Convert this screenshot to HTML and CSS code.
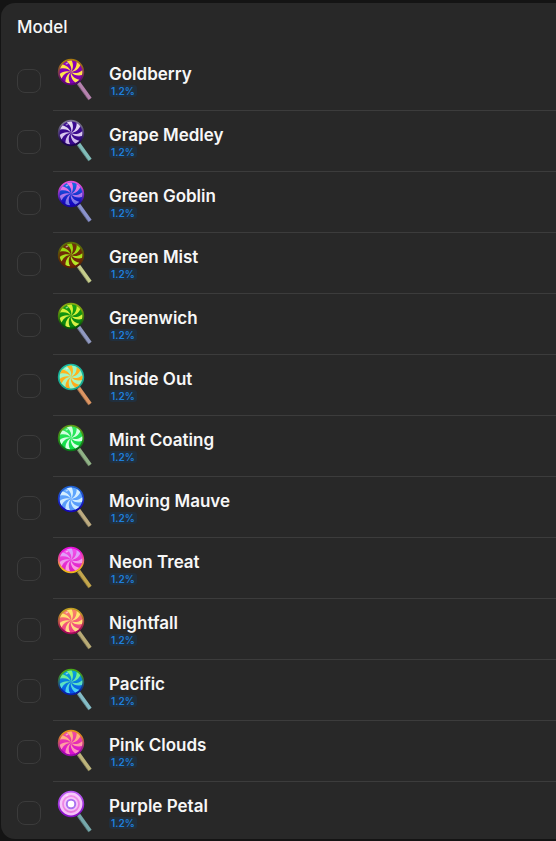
FILE: index.html
```
<!DOCTYPE html>
<html lang="en">
<head>
  <meta charset="utf-8">
  <title>Model</title>
  <link rel="stylesheet" href="styles.css">
</head>
<body>
  <main class="model-card">
    <h1 class="card-title">Model</h1>
    <ul id="model-list" class="model-list"></ul>
  </main>

  <script src="script.js"></script>
</body>
</html>
```

FILE: styles.css
```
* {
  box-sizing: border-box;
}

body {
  margin: 0;
  padding: 3px 0 2px 1px;
  background-color: #141414;
  color: #f7f7f7;
  font-family: Inter, sans-serif;
}

.model-card {
  background-color: #282828;
  border-radius: 14px 0 0 14px;
}

.card-title {
  margin: 0;
  padding: 13px 16px 12px;
  font-size: 17px;
  line-height: 22px;
  font-weight: 500;
}

.model-list {
  margin: 0;
  padding: 0;
  list-style: none;
}

.model-row {
  display: flex;
  align-items: flex-start;
  gap: 12px;
  padding-left: 16px;
}

.model-check {
  appearance: none;
  flex: none;
  width: 24px;
  height: 24px;
  margin: 19px 0 0;
  border: 1px solid #3b3b3b;
  border-radius: 8px;
  cursor: pointer;
}

.model-check:checked {
  background-color: #2481cc;
}

.model-label {
  display: flex;
  flex: 1;
  gap: 12px;
  border-bottom: 1px solid #3c3c3c;
  cursor: pointer;
}

.model-icon {
  flex: none;
  width: 44px;
  height: 44px;
  margin-top: 8px;
}

.model-text {
  display: flex;
  flex-direction: column;
  align-items: flex-start;
  padding: 13px 0;
}

.model-name {
  font-size: 17px;
  line-height: 22px;
  font-weight: 600;
}

.model-rarity {
  padding: 0 2px;
  border-radius: 3px;
  background-color: #212f3d;
  color: #1f7fdc;
  font-size: 10px;
  line-height: 12px;
  font-weight: 600;
}

.model-row:last-child .model-label {
  border-bottom: none;
}

.model-row:last-child .model-text {
  padding-bottom: 10px;
}
```

FILE: script.js
```
// rim, candy and swirl are [top, bottom] colors
const models = [
  { name: 'Goldberry', rim: ['#a87810', '#5a0478'], candy: ['#8a00b8', '#8200b0'], swirl: ['#ffe13a', '#ffe65a'], stick: '#b582ae' },
  { name: 'Grape Medley', rim: ['#77708c', '#1c0450'], candy: ['#3a0a90', '#38088c'], swirl: ['#e4daf4', '#cdb6e8'], stick: '#80bcb8' },
  { name: 'Green Goblin', rim: ['#e050d8', '#1808a0'], candy: ['#1668e0', '#1408c0'], swirl: ['#ff70e8', '#7078e8'], stick: '#8a92cc' },
  { name: 'Green Mist', rim: ['#5c7008', '#601e04'], candy: ['#703008', '#702408'], swirl: ['#90d808', '#b8e828'], stick: '#c6cd8c' },
  { name: 'Greenwich', rim: ['#88a810', '#045808'], candy: ['#18a010', '#088010'], swirl: ['#d4f030', '#d8f048'], stick: '#9099c0' },
  { name: 'Inside Out', rim: ['#18b8a0', '#18a890'], candy: ['#98f8c8', '#b0f4b8'], swirl: ['#ffb820', '#ffa818'], stick: '#dc9562' },
  { name: 'Mint Coating', rim: ['#609818', '#087818'], candy: ['#30e860', '#10dc48'], swirl: ['#d0ffe0', '#d8ffe8'], stick: '#90b286' },
  { name: 'Moving Mauve', rim: ['#2060d0', '#1408b8'], candy: ['#60a8ff', '#5898f8'], swirl: ['#d8f0ff', '#c8e8ff'], stick: '#bdab80' },
  { name: 'Neon Treat', rim: ['#e810d8', '#f0b818'], candy: ['#f050e8', '#e020c8'], swirl: ['#d8a0ff', '#ff98e0'], stick: '#c3a64c' },
  { name: 'Nightfall', rim: ['#c0a020', '#a00858'], candy: ['#f88068', '#f04088'], swirl: ['#ffe868', '#ffd888'], stick: '#b9ab76' },
  { name: 'Pacific', rim: ['#48a818', '#0820a8'], candy: ['#08a0d8', '#0858e8'], swirl: ['#78f878', '#48d0f8'], stick: '#84bdc7' },
  { name: 'Pink Clouds', rim: ['#e09018', '#9808a8'], candy: ['#f048a0', '#d810d0'], swirl: ['#ffb870', '#ff88c8'], stick: '#bdb47b' },
  { name: 'Purple Petal', rim: ['#b858f0', '#8810c8'], candy: ['#f6c8fa', '#f6c0f8'], swirl: ['#f090e8', '#e878e0'], stick: '#76a8ab', rings: true }
];

function gradient(id, colors) {
  return `<linearGradient id="${id}" gradientUnits="userSpaceOnUse" x1="0" y1="-13" x2="0" y2="13">
    <stop offset="0.15" stop-color="${colors[0]}"/><stop offset="0.85" stop-color="${colors[1]}"/>
  </linearGradient>`;
}

// gradient goes on the joined shape, so every blade is lit from the same side
function swirl(id) {
  let blades = '';
  for (let i = 0; i < 7; i++) {
    blades += `<path transform="rotate(${i * 360 / 7})" d="M0 0C1 -3 0 -7.5 -4.2 -10.6A11.4 11.4 0 0 1 0.6 -11.4C2.6 -8 2.4 -3 0 0Z" fill="#fff"/>`;
  }
  return `<mask id="${id}-mask" maskUnits="userSpaceOnUse" x="-13" y="-13" width="26" height="26">${blades}</mask>
    <circle r="12" fill="url(#${id})" mask="url(#${id}-mask)"/>`;
}

function rings(id) {
  return `<circle r="8" fill="none" stroke="url(#${id})" stroke-width="1.8"/>
    <circle r="4.2" fill="none" stroke="#a872f0" stroke-width="2"/>
    <circle r="3.2" fill="#fff"/>`;
}

function lollipop(model, i) {
  return `<svg class="model-icon" viewBox="0 0 44 44" aria-hidden="true">
    <defs>
      ${gradient('rim' + i, model.rim)}
      ${gradient('candy' + i, model.candy)}
      ${gradient('swirl' + i, model.swirl)}
    </defs>
    <path d="M25.5 25L37 41" stroke="${model.stick}" stroke-width="4"/>
    <path d="M24.3 26L35.7 42" stroke="#000" stroke-opacity="0.25" stroke-width="1"/>
    <g transform="translate(18 14)">
      <circle r="13.2" fill="url(#rim${i})"/>
      <circle r="11.4" fill="url(#candy${i})"/>
      ${model.rings ? rings('swirl' + i) : swirl('swirl' + i)}
      <ellipse cx="-4" cy="-8.5" rx="1.5" ry="0.8" transform="rotate(-20 -4 -8.5)" fill="#fff" fill-opacity="0.5"/>
    </g>
  </svg>`;
}

document.getElementById('model-list').innerHTML = models.map(function(model, i) {
  return `<li class="model-row">
    <input type="checkbox" class="model-check" id="model-${i}">
    <label class="model-label" for="model-${i}">
      ${lollipop(model, i)}
      <span class="model-text">
        <span class="model-name">${model.name}</span>
        <span class="model-rarity">1.2%</span>
      </span>
    </label>
  </li>`;
}).join('');
```
